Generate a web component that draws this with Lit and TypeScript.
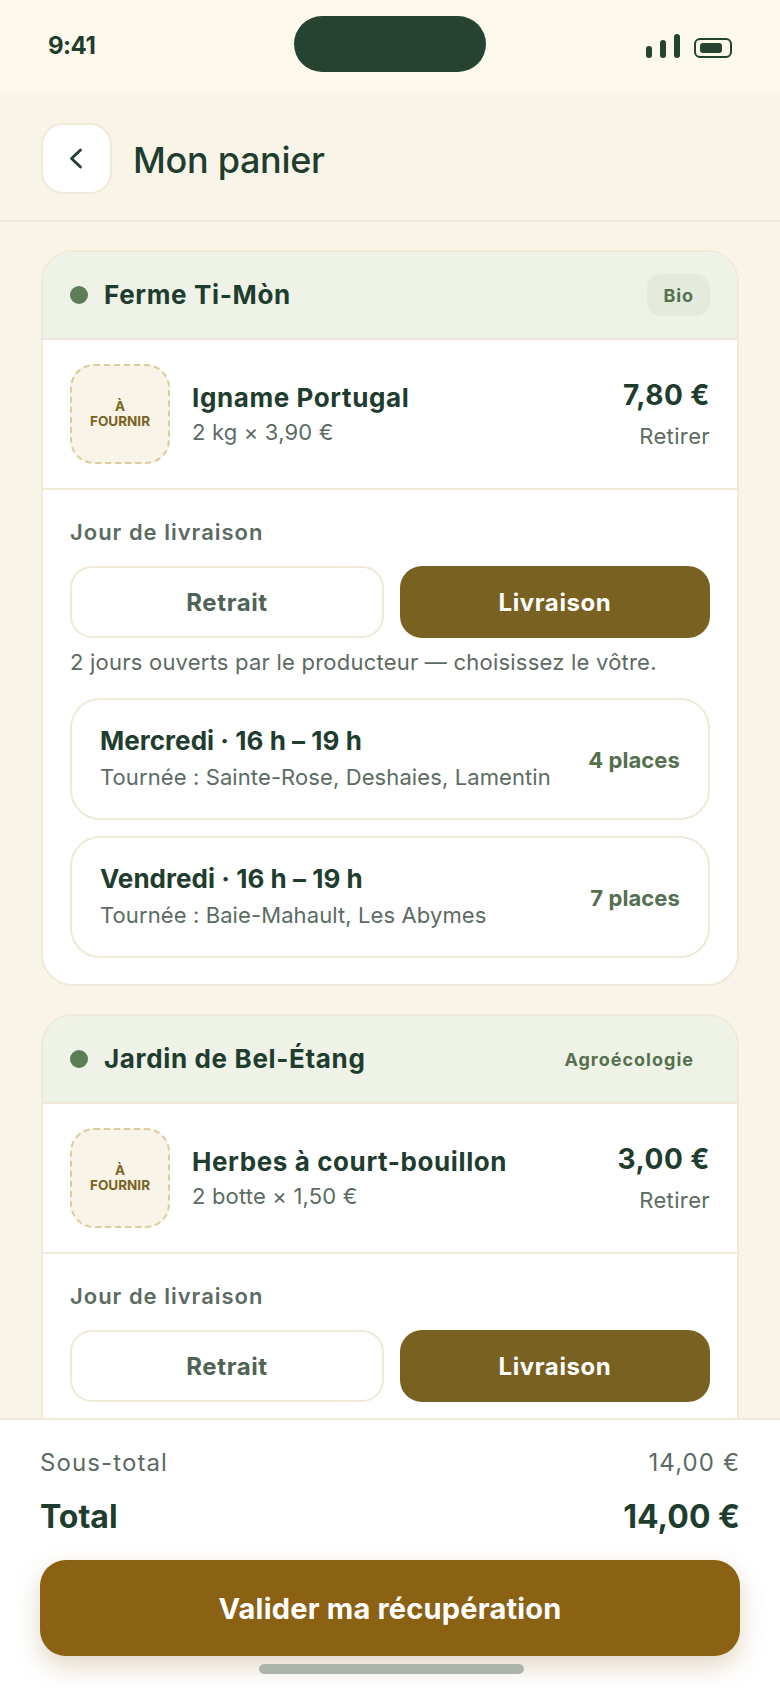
import { LitElement, html, css } from "lit";
import { customElement } from "lit/decorators.js";

type Slot = { t: string; s: string; p: string };
type Card = { name: string; badge: string; plain?: boolean; item: string; sub: string; price: string; note?: string; slots?: Slot[] };

const cards: Card[] = [
  {
    name: "Ferme Ti-Mòn", badge: "Bio", item: "Igname Portugal", sub: "2 kg × 3,90 €", price: "7,80 €",
    note: "2 jours ouverts par le producteur — choisissez le vôtre.",
    slots: [
      { t: "Mercredi · 16 h – 19 h", s: "Tournée : Sainte-Rose, Deshaies, Lamentin", p: "4 places" },
      { t: "Vendredi · 16 h – 19 h", s: "Tournée : Baie-Mahault, Les Abymes", p: "7 places" },
    ],
  },
  { name: "Jardin de Bel-Étang", badge: "Agroécologie", plain: true, item: "Herbes à court-bouillon", sub: "2 botte × 1,50 €", price: "3,00 €" },
];

@customElement("app-root")
export class AppRoot extends LitElement {
  static styles = css`
    :host { display: flex; flex-direction: column; width: 780px; height: 1688px; overflow: hidden; background: #f8f4e7; font-family: Inter, "Liberation Sans", sans-serif; color: #1f3d2f; }
    * { box-sizing: border-box; }
    .status { height: 92px; flex: none; background: #fdf8ec; display: flex; align-items: flex-start; justify-content: space-between; padding: 0 48px; position: relative; }
    .time { font-size: 24px; font-weight: 700; line-height: 30px; margin-top: 31px; letter-spacing: -0.5px; }
    .island { position: absolute; left: 294px; top: 16px; width: 192px; height: 56px; border-radius: 28px; background: #264331; }
    .sys { display: flex; align-items: flex-end; gap: 14px; margin-top: 34px; }
    .bars { display: flex; align-items: flex-end; gap: 8px; }
    .bars i { display: block; width: 6px; border-radius: 3px; background: #264331; }
    .batt { width: 38px; height: 20px; border: 2px solid #264331; border-radius: 6px; padding: 3px 4px; }
    .batt i { display: block; width: 22px; height: 10px; border-radius: 3px; background: #264331; }
    .header { height: 130px; flex: none; border-bottom: 2px solid #f0e9d8; display: flex; align-items: center; gap: 21px; padding: 5px 41px 0; }
    .back { width: 71px; height: 71px; border-radius: 22px; background: #fff; border: 2px solid #f0e9d8; display: flex; align-items: center; justify-content: center; }
    h1 { margin: 2px 0 0; font-size: 36px; font-weight: 500; letter-spacing: -0.3px; }
    .scroll { flex: 1; min-height: 0; overflow: hidden; padding: 28px 41px 0; display: flex; flex-direction: column; gap: 28px; }
    .card { flex: none; background: #fff; border: 2px solid #f0e9d8; border-radius: 32px; overflow: hidden; }
    .card.cut { min-height: 520px; }
    .head { height: 88px; background: #eef2e7; border-bottom: 2px solid #f0e9d8; display: flex; align-items: center; padding: 0 27px; }
    .dot { width: 18px; height: 18px; border-radius: 50%; background: #5d7d56; margin-right: 16px; }
    .name { flex: 1; font-size: 26px; font-weight: 700; letter-spacing: 0.65px; padding-bottom: 2px; }
    .badge { height: 42px; border-radius: 14px; padding: 0 16px; display: flex; align-items: center; background: #e4ebdd; color: #55704f; font-size: 18px; font-weight: 700; letter-spacing: 0.9px; }
    .badge.plain { background: transparent; letter-spacing: 1px; }
    .item { height: 150px; border-bottom: 2px solid #f0e9d8; display: flex; align-items: center; padding: 0 27px; gap: 22px; }
    .thumb { width: 100px; height: 100px; flex: none; border: 2px dashed #dccb9c; border-radius: 24px; background: #f8f4e7; color: #7a6222; font-size: 13.5px; font-weight: 700; line-height: 15px; text-align: center; display: flex; align-items: center; justify-content: center; }
    .info { flex: 1; padding-bottom: 2px; }
    .iname { font-size: 26px; font-weight: 700; line-height: 34px; letter-spacing: 0.6px; }
    .isub { font-size: 22px; line-height: 28px; margin-top: 3px; color: #5c6b62; letter-spacing: 0.18px; }
    .pr { text-align: right; }
    .price { font-size: 28px; font-weight: 700; line-height: 36px; letter-spacing: 0.47px; margin-top: -1px; }
    .rm { font-size: 22px; line-height: 28px; margin-top: 9px; color: #5c6b62; letter-spacing: 0.37px; }
    .sec { padding: 28px 27px 26px; }
    .lab { font-size: 22px; font-weight: 600; line-height: 28px; color: #5c6b62; letter-spacing: 1px; }
    .seg { display: flex; gap: 16px; margin-top: 20px; }
    .seg div { flex: 1; height: 72px; border-radius: 22px; display: flex; align-items: center; justify-content: center; font-size: 24px; font-weight: 700; letter-spacing: 0.6px; }
    .off { border: 2px solid #f0e9d8; color: #4f6356; }
    .on { background: #796122; color: #fff; }
    .note { font-size: 22px; line-height: 28px; margin-top: 10px; color: #5c6b62; letter-spacing: 0.22px; }
    .slots { display: flex; flex-direction: column; gap: 16px; margin-top: 22px; }
    .slot { height: 122px; border: 2px solid #f0e9d8; border-radius: 30px; padding: 0 28px; display: flex; align-items: center; justify-content: space-between; }
    .stx { padding-bottom: 4px; }
    .st { font-size: 26px; font-weight: 700; line-height: 34px; letter-spacing: 0.04px; }
    .ss { font-size: 22px; line-height: 28px; margin-top: 5px; color: #5c6b62; letter-spacing: 0.1px; }
    .pl { font-size: 22px; font-weight: 700; color: #55704f; letter-spacing: 0.1px; padding-top: 2px; }
    .foot { flex: none; height: 270px; background: #fff; border-top: 2px solid #f0e9d8; padding: 28px 40px 0; position: relative; }
    .row { display: flex; justify-content: space-between; align-items: center; }
    .r1 { font-size: 24px; line-height: 30px; color: #5c6b62; letter-spacing: 1.1px; }
    .r2 { font-size: 32px; font-weight: 700; line-height: 40px; margin-top: 19px; letter-spacing: 0; }
    .cta { margin-top: 23px; height: 96px; border-radius: 26px; background: #8b6114; color: #fff; font-size: 29px; font-weight: 700; display: flex; align-items: center; justify-content: center; box-shadow: 0 10px 24px rgba(139, 97, 20, 0.25); letter-spacing: 0.2px; }
    .home { position: absolute; left: 259px; top: 244px; width: 265px; height: 10px; border-radius: 5px; background: #adb5ab; }
  `;

  render() {
    return html`
      <div class="status">
        <span class="time">9:41</span>
        <div class="island"></div>
        <div class="sys">
          <div class="bars"><i style="height:12px"></i><i style="height:18px"></i><i style="height:24px"></i></div>
          <div class="batt"><i></i></div>
        </div>
      </div>
      <div class="header">
        <div class="back">
          <svg width="16" height="24" viewBox="0 0 16 24" fill="none" stroke="#1f3d2f" stroke-width="2.8" stroke-linecap="round" stroke-linejoin="round"><path d="M11.5 3 2.5 11.5 11.5 20"/></svg>
        </div>
        <h1>Mon panier</h1>
      </div>
      <div class="scroll">
        ${cards.map((c) => html`
          <div class="card ${c.slots ? "" : "cut"}">
            <div class="head">
              <span class="dot"></span><span class="name">${c.name}</span>
              <span class="badge ${c.plain ? "plain" : ""}">${c.badge}</span>
            </div>
            <div class="item">
              <div class="thumb">À<br />FOURNIR</div>
              <div class="info"><div class="iname">${c.item}</div><div class="isub">${c.sub}</div></div>
              <div class="pr"><div class="price">${c.price}</div><div class="rm">Retirer</div></div>
            </div>
            <div class="sec">
              <div class="lab">Jour de livraison</div>
              <div class="seg"><div class="off">Retrait</div><div class="on">Livraison</div></div>
              ${c.note ? html`<div class="note">${c.note}</div>` : ""}
              ${c.slots ? html`<div class="slots">${c.slots.map((s) => html`
                <div class="slot"><div class="stx"><div class="st">${s.t}</div><div class="ss">${s.s}</div></div><div class="pl">${s.p}</div></div>`)}</div>` : ""}
            </div>
          </div>`)}
      </div>
      <div class="foot">
        <div class="row r1"><span>Sous-total</span><span>14,00 €</span></div>
        <div class="row r2"><span>Total</span><span>14,00 €</span></div>
        <div class="cta">Valider ma récupération</div>
        <div class="home"></div>
      </div>
    `;
  }
}
